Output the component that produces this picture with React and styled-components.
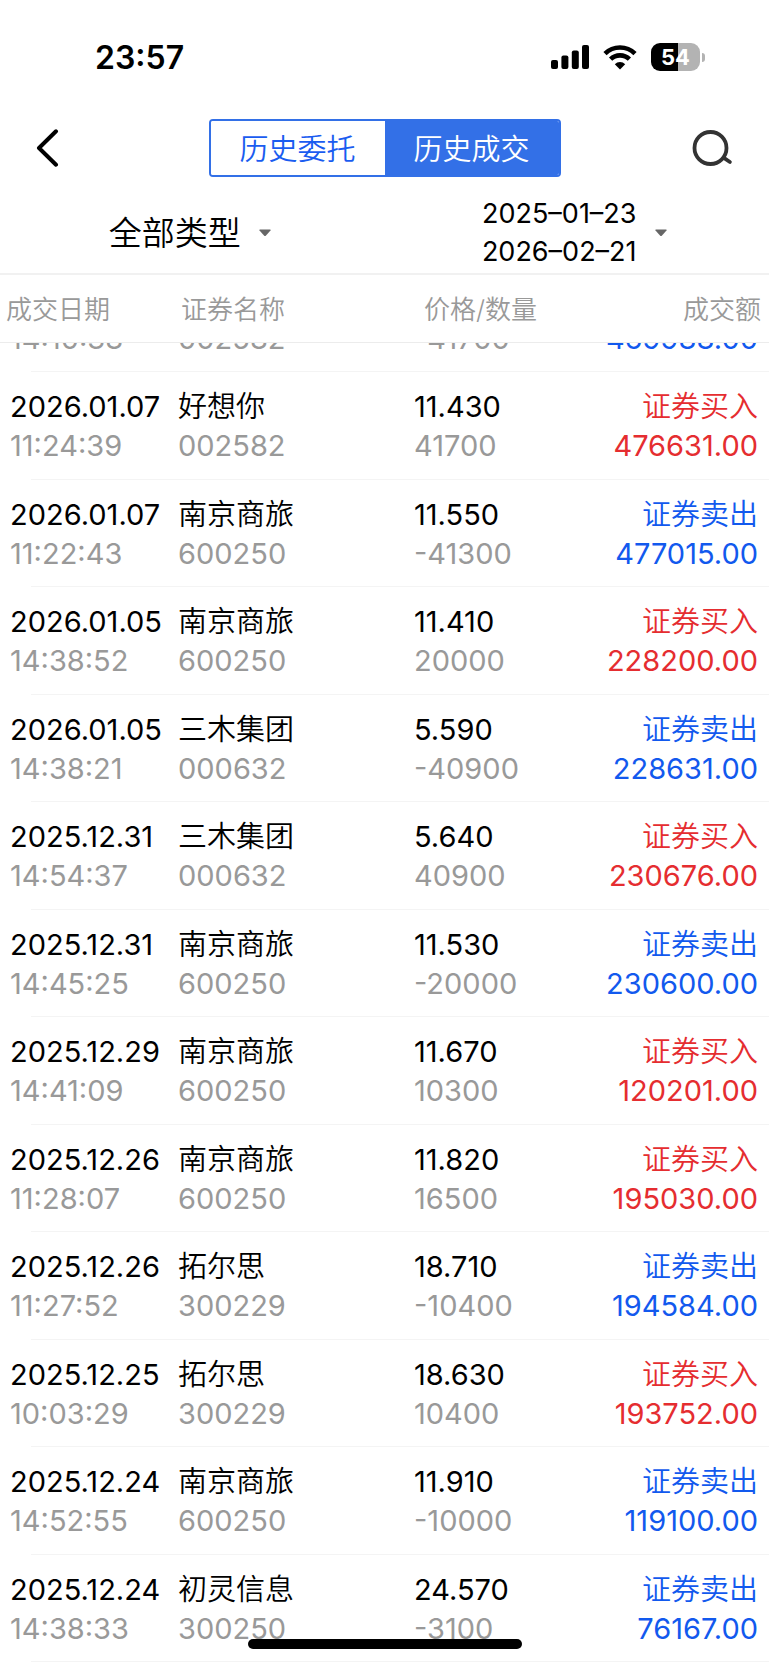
import React from 'react';
import styled, { createGlobalStyle } from 'styled-components';

const GlobalStyle = createGlobalStyle`
  * {
    box-sizing: border-box;
  }

  body {
    margin: 0;
    background: #fff;
    color: #000;
    font-family: Inter, 'Noto Sans CJK SC', sans-serif;
  }

  button {
    margin: 0;
    padding: 0;
    border: 0;
    background: none;
    color: inherit;
    font: inherit;
    cursor: pointer;
  }
`;

const Screen = styled.div`
  display: flex;
  flex-direction: column;
  height: 100vh;
  overflow: hidden;
`;

const StatusBar = styled.div`
  display: flex;
  justify-content: space-between;
  align-items: center;
  height: 114px;
  padding: 0 64px 0 95px;
`;

const Clock = styled.time`
  font-size: 32px;
  font-weight: 600;
`;

const StatusIcons = styled.div`
  display: flex;
  align-items: center;
  gap: 14px;
`;

const Battery = styled.div`
  display: flex;
  align-items: center;
  gap: 2px;
`;

const BatteryBody = styled.div`
  width: 49px;
  height: 28px;
  border-radius: 9px;
  background: linear-gradient(to right, #000 56%, #b3b3b3 56%);
  color: #fff;
  font-size: 22px;
  font-weight: 700;
  line-height: 28px;
  text-align: center;
`;

const BatteryTip = styled.div`
  width: 3px;
  height: 9px;
  border-radius: 0 3px 3px 0;
  background: #b3b3b3;
`;

const NavBar = styled.header`
  display: grid;
  grid-template-columns: 1fr 352px 1fr;
  align-items: center;
  height: 68px;
  padding: 0 36px;
`;

const IconButton = styled.button`
  display: flex;
  justify-self: ${(props) => (props.$end ? 'end' : 'start')};
`;

const Tabs = styled.div`
  display: flex;
  height: 58px;
  border: 2px solid #3370e7;
  border-radius: 4px;
  overflow: hidden;
`;

const Tab = styled.button`
  && {
    flex: 1;
    padding-bottom: 2px;
    background: ${(props) => (props.$active ? '#3370e7' : '#fff')};
    color: ${(props) => (props.$active ? '#fff' : '#1a5cf0')};
    font-size: 29px;
    font-weight: 350;
  }
`;

const Filters = styled.div`
  display: grid;
  grid-template-columns: 1fr 1fr;
  height: 93px;
  padding-top: 10px;
  border-bottom: 2px solid #f1f1f1;
`;

const Filter = styled.button`
  && {
    display: flex;
    justify-content: center;
    align-items: center;
    gap: 18px;
    padding-right: 5px;
  }
`;

const TypeLabel = styled.span`
  font-size: 33px;
  font-weight: 350;
  line-height: 38px;
`;

const DateRange = styled.span`
  font-size: 27px;
  line-height: 38px;
`;

const Table = styled.table`
  display: flex;
  flex-direction: column;
  flex: 1;
  min-height: 0;
`;

const Head = styled.thead`
  display: block;
  border-bottom: 1px solid #ececec;
`;

// The list is scrolled part of the way through its first row
const Body = styled.tbody`
  display: block;
  flex: 1;
  min-height: 0;
  overflow: hidden;

  tr:first-child {
    margin-top: -78px;
  }
`;

const columns = '178fr 236fr 156fr 199fr';

const HeadRow = styled.tr`
  display: grid;
  grid-template-columns: ${columns};
  height: 67px;
  padding-bottom: 3px;
  align-items: center;
`;

const HeadCell = styled.th`
  padding: 0 8px 0 ${(props) => props.$indent || 0}px;
  color: #999;
  font-size: 26px;
  font-weight: 350;
  text-align: ${(props) => (props.$right ? 'right' : 'left')};
  white-space: nowrap;
`;

const Row = styled.tr`
  display: grid;
  grid-template-columns: ${columns};
  height: 107px;
  padding-top: 15px;
  background: linear-gradient(#f4f4f4, #f4f4f4) no-repeat 31px 100% / 100% 1px;

  &:nth-child(even) {
    height: 108px;
  }
`;

const Cell = styled.td`
  display: flex;
  flex-direction: column;
  align-items: ${(props) => (props.$right ? 'flex-end' : 'flex-start')};
  padding: 0 ${(props) => (props.$right ? 11 : 0)}px 0 ${(props) => props.$indent || 0}px;
  color: ${(props) => props.$color || '#000'};
  font-size: 29px;
  line-height: 39px;
  white-space: nowrap;
`;

const Muted = styled.span`
  color: #999;
`;

const Cjk = styled.span`
  font-weight: 350;
`;

const HomeIndicator = styled.div`
  position: fixed;
  bottom: 16px;
  left: 50%;
  width: 274px;
  height: 10px;
  border-radius: 5px;
  background: #000;
  transform: translateX(-50%);
`;

const trades = [
  ['2026.01.07', '14:10:38', '好想你', '002582', '11.270', '-41700', false, '469988.00'],
  ['2026.01.07', '11:24:39', '好想你', '002582', '11.430', '41700', true, '476631.00'],
  ['2026.01.07', '11:22:43', '南京商旅', '600250', '11.550', '-41300', false, '477015.00'],
  ['2026.01.05', '14:38:52', '南京商旅', '600250', '11.410', '20000', true, '228200.00'],
  ['2026.01.05', '14:38:21', '三木集团', '000632', '5.590', '-40900', false, '228631.00'],
  ['2025.12.31', '14:54:37', '三木集团', '000632', '5.640', '40900', true, '230676.00'],
  ['2025.12.31', '14:45:25', '南京商旅', '600250', '11.530', '-20000', false, '230600.00'],
  ['2025.12.29', '14:41:09', '南京商旅', '600250', '11.670', '10300', true, '120201.00'],
  ['2025.12.26', '11:28:07', '南京商旅', '600250', '11.820', '16500', true, '195030.00'],
  ['2025.12.26', '11:27:52', '拓尔思', '300229', '18.710', '-10400', false, '194584.00'],
  ['2025.12.25', '10:03:29', '拓尔思', '300229', '18.630', '10400', true, '193752.00'],
  ['2025.12.24', '14:52:55', '南京商旅', '600250', '11.910', '-10000', false, '119100.00'],
  ['2025.12.24', '14:38:33', '初灵信息', '300250', '24.570', '-3100', false, '76167.00'],
];

const Signal = () => (
  <svg width="38" height="25" viewBox="0 0 38 25" aria-hidden="true">
    <rect x="0" y="15" width="7" height="9" rx="2" />
    <rect x="10.4" y="10.5" width="7" height="13.5" rx="2" />
    <rect x="20.8" y="5.5" width="7" height="18.5" rx="2" />
    <rect x="31" y="0" width="7" height="24" rx="2" />
  </svg>
);

const Wifi = () => (
  <svg width="34" height="25" viewBox="0 0 34 25" aria-hidden="true">
    <g fill="none" stroke="#000" strokeWidth="4.6">
      <path d="M2 8.6a21.5 21.5 0 0 1 30 0" />
      <path d="M7.6 14.2a13.4 13.4 0 0 1 18.8 0" />
    </g>
    <path d="M17 24.4l-5.2-5.2a7.4 7.4 0 0 1 10.4 0z" />
  </svg>
);

const Back = () => (
  <svg width="23" height="38" viewBox="0 0 23 38" fill="none" stroke="#000" strokeWidth="4" strokeLinecap="round" strokeLinejoin="round">
    <path d="M20 2.3L3 19l17 16.7" />
  </svg>
);

const Search = () => (
  <svg width="41" height="38" viewBox="0 0 41 38" fill="none" stroke="#333" strokeWidth="3.8" strokeLinecap="round">
    <circle cx="18.5" cy="19" r="16" />
    <path d="M31.5 28.6l6.4 4.4" />
  </svg>
);

const Caret = () => (
  <svg width="12" height="8" viewBox="0 0 12 8" fill="#666" aria-hidden="true">
    <path d="M1 .5h10q1 0 .5 1L7 6.5q-1 1-2 0L.5 1.500q-.5-1 .5-1z" />
  </svg>
);

const App = () => (
  <>
    <GlobalStyle />
    <Screen>
      <StatusBar>
        <Clock>23:57</Clock>
        <StatusIcons>
          <Signal />
          <Wifi />
          <Battery>
            <BatteryBody>54</BatteryBody>
            <BatteryTip />
          </Battery>
        </StatusIcons>
      </StatusBar>
      <NavBar>
        <IconButton type="button" aria-label="返回">
          <Back />
        </IconButton>
        <Tabs>
          <Tab type="button">历史委托</Tab>
          <Tab type="button" $active>历史成交</Tab>
        </Tabs>
        <IconButton type="button" aria-label="搜索" $end>
          <Search />
        </IconButton>
      </NavBar>
      <Filters>
        <Filter type="button">
          <TypeLabel>全部类型</TypeLabel>
          <Caret />
        </Filter>
        <Filter type="button">
          <DateRange>
            2025–01–23
            <br />
            2026–02–21
          </DateRange>
          <Caret />
        </Filter>
      </Filters>
      <Table>
        <Head>
          <HeadRow>
            <HeadCell $indent={6}>成交日期</HeadCell>
            <HeadCell $indent={3}>证券名称</HeadCell>
            <HeadCell $indent={10}>价格/数量</HeadCell>
            <HeadCell $right>成交额</HeadCell>
          </HeadRow>
        </Head>
        <Body>
          {trades.map(([date, time, name, code, price, count, buy, amount]) => (
            <Row key={date + time}>
              <Cell $indent={10}>
                <span>{date}</span>
                <Muted>{time}</Muted>
              </Cell>
              <Cell>
                <Cjk>{name}</Cjk>
                <Muted>{code}</Muted>
              </Cell>
              <Cell>
                <span>{price}</span>
                <Muted>{count}</Muted>
              </Cell>
              <Cell $right $color={buy ? '#e52d30' : '#1259ee'}>
                <Cjk>{buy ? '证券买入' : '证券卖出'}</Cjk>
                <span>{amount}</span>
              </Cell>
            </Row>
          ))}
        </Body>
      </Table>
    </Screen>
    <HomeIndicator />
  </>
);

export default App;
